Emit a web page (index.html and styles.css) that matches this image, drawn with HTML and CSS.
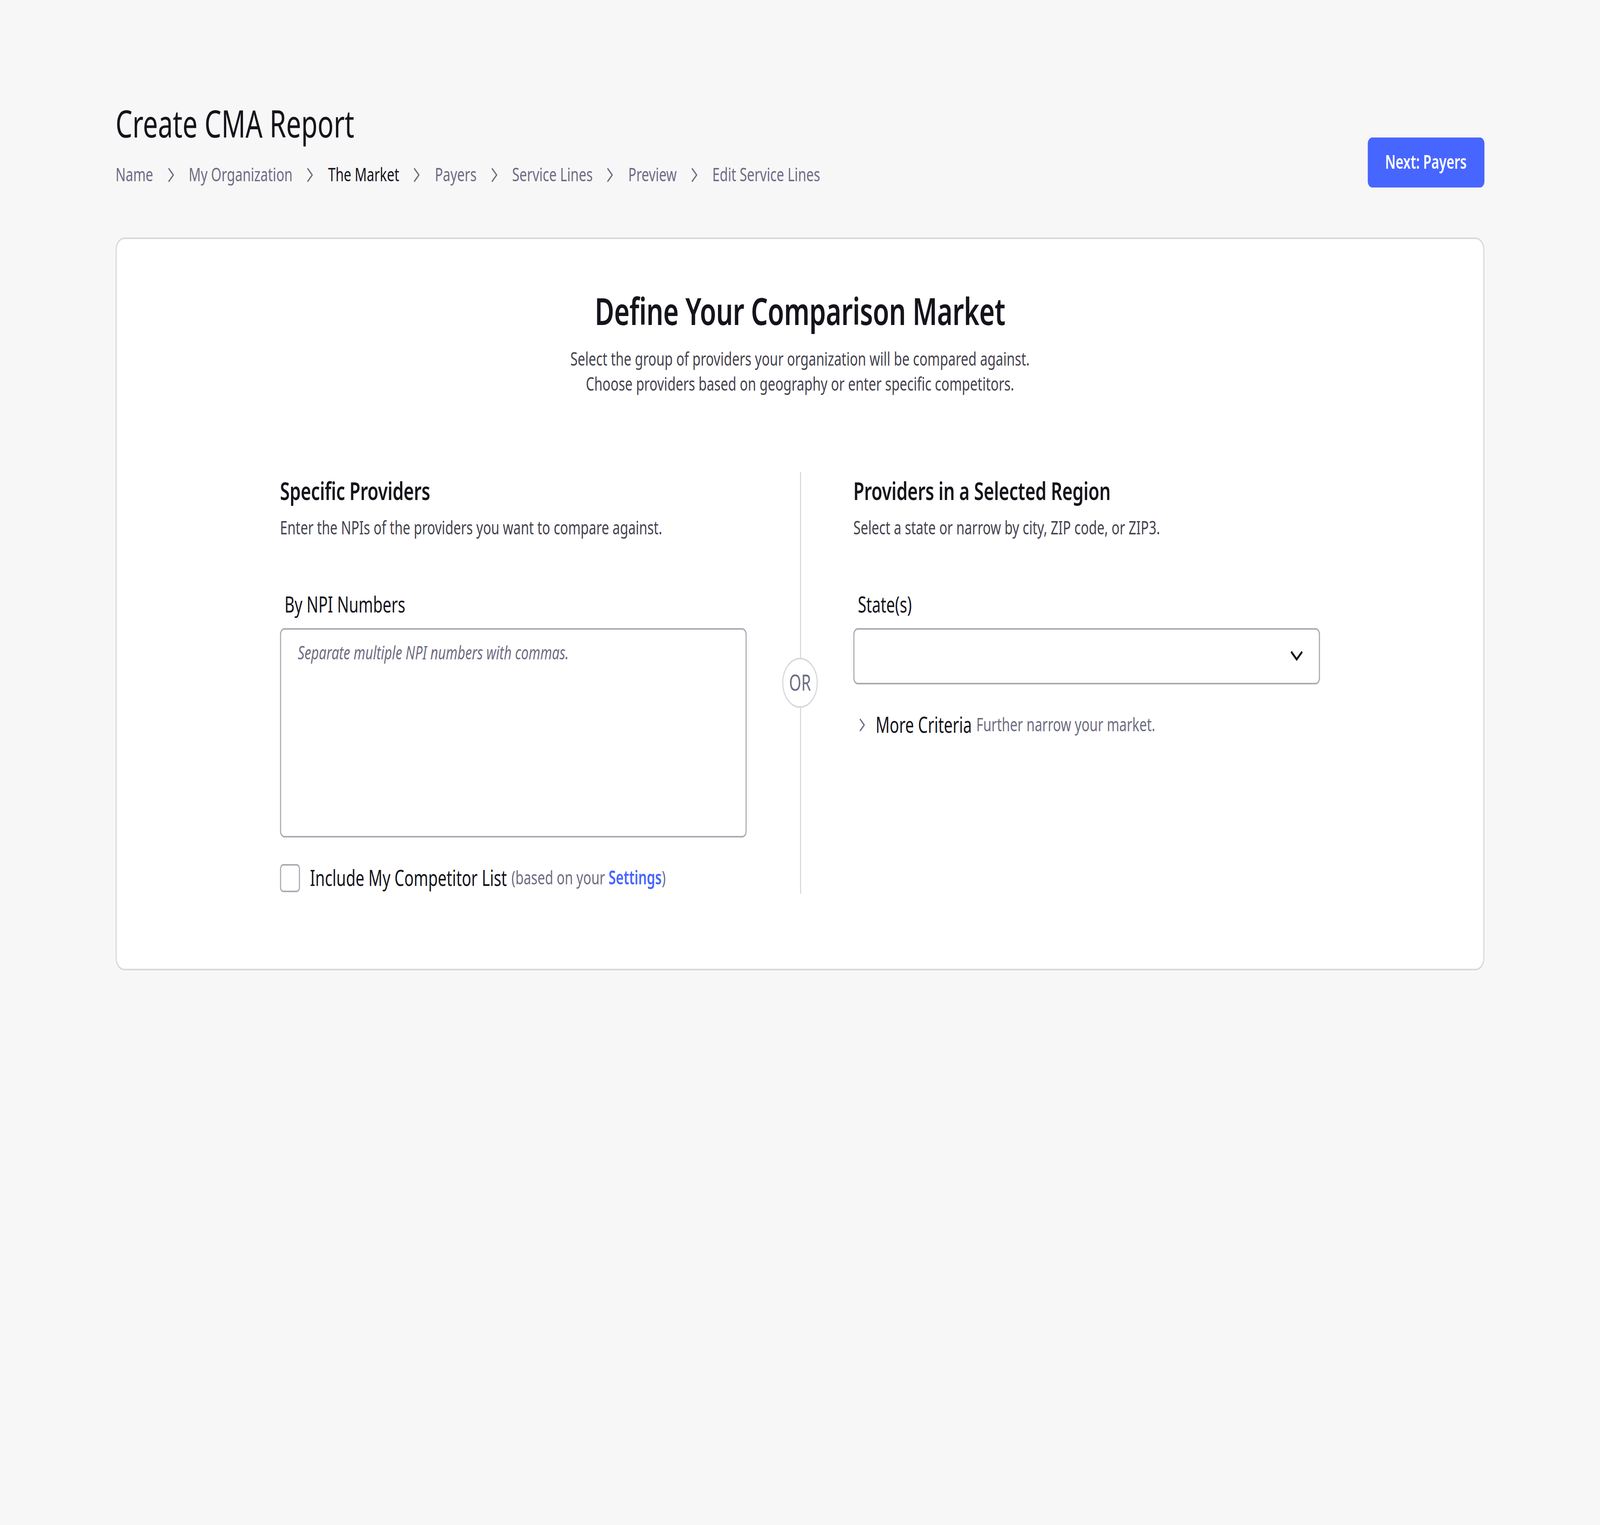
FILE: index.html
```html
<!DOCTYPE html>
<html lang="en">
<head>
<meta charset="utf-8">
<title>Create CMA Report</title>
<link rel="stylesheet" href="styles.css">
</head>
<body>
<div class="page">
  <header class="header">
    <div class="header-text">
      <h1 class="page-title">Create CMA Report</h1>
      <nav class="crumbs">
        <span class="crumb">Name</span>
        <svg class="crumb-sep" viewBox="0 0 16 16"><path d="M6 4 L10 8 L6 12"/></svg>
        <span class="crumb">My Organization</span>
        <svg class="crumb-sep" viewBox="0 0 16 16"><path d="M6 4 L10 8 L6 12"/></svg>
        <span class="crumb crumb-active">The Market</span>
        <svg class="crumb-sep" viewBox="0 0 16 16"><path d="M6 4 L10 8 L6 12"/></svg>
        <span class="crumb">Payers</span>
        <svg class="crumb-sep" viewBox="0 0 16 16"><path d="M6 4 L10 8 L6 12"/></svg>
        <span class="crumb">Service Lines</span>
        <svg class="crumb-sep" viewBox="0 0 16 16"><path d="M6 4 L10 8 L6 12"/></svg>
        <span class="crumb">Preview</span>
        <svg class="crumb-sep" viewBox="0 0 16 16"><path d="M6 4 L10 8 L6 12"/></svg>
        <span class="crumb">Edit Service Lines</span>
      </nav>
    </div>
    <button class="btn-primary" type="button">Next: Payers</button>
  </header>

  <section class="card">
    <h2 class="card-title">Define Your Comparison Market</h2>
    <p class="card-sub">Select the group of providers your organization will be compared against.<br>Choose providers based on geography or enter specific competitors.</p>

    <div class="columns">
      <div class="col">
        <h3 class="col-title">Specific Providers</h3>
        <p class="col-desc">Enter the NPIs of the providers you want to compare against.</p>
        <label class="field-label" for="npi">By NPI Numbers</label>
        <textarea id="npi" class="textarea" placeholder="Separate multiple NPI numbers with commas."></textarea>
        <div class="check-row">
          <span class="checkbox"></span>
          <span class="check-label">Include My Competitor List</span>
          <span class="check-note">(based on your <span class="link">Settings</span>)</span>
        </div>
      </div>

      <div class="divider">
        <span class="divider-line"></span>
        <span class="or">OR</span>
        <span class="divider-line"></span>
      </div>

      <div class="col">
        <h3 class="col-title">Providers in a Selected Region</h3>
        <p class="col-desc">Select a state or narrow by city, ZIP code, or ZIP3.</p>
        <div class="field-label">State(s)</div>
        <div class="select">
          <svg class="select-caret" viewBox="0 0 16 16"><path d="M3.6 5.6 L8 10 L12.4 5.6"/></svg>
        </div>
        <div class="more">
          <svg class="more-caret" viewBox="0 0 16 16"><path d="M6.2 4.4 L9.8 8 L6.2 11.6"/></svg>
          <span class="more-label">More Criteria</span>
          <span class="more-note">Further narrow your market.</span>
        </div>
      </div>
    </div>
  </section>
</div>
</body>
</html>
```

FILE: styles.css
```css
html {
  background: #f7f7f7;
}

body {
  margin: 0;
  min-height: 100vh;
  background: #f7f7f7;
  font-family: "Noto Sans", "Open Sans", "Liberation Sans", sans-serif;
  color: #16161d;
}

.page {
  box-sizing: border-box;
  width: 1440px;
  padding: 63px 104px 64px;
  transform-origin: 0 0;
  transform: scale(2.84444, 4);
}

.header {
  display: flex;
  justify-content: space-between;
  align-items: flex-end;
}

.page-title {
  margin: 0;
  font-size: 24px;
  line-height: 32px;
  font-weight: 400;
  color: #14141b;
}

.crumbs {
  display: flex;
  align-items: center;
  gap: 8px;
  margin-top: 9px;
  font-size: 12px;
  line-height: 16px;
}

.crumb {
  color: #6e6d84;
}

.crumb-active {
  color: #16161d;
}

.crumb-sep {
  width: 16px;
  height: 16px;
  fill: none;
  stroke: #6e6d84;
  stroke-width: 1;
  stroke-linecap: round;
  stroke-linejoin: round;
}

.btn-primary {
  height: 32px;
  padding: 0 16px;
  border: none;
  border-radius: 4px;
  background: #4766ff;
  color: #ffffff;
  font-family: inherit;
  font-size: 12px;
  font-weight: 600;
  line-height: 16px;
}

.card {
  margin-top: 32px;
  padding: 32px 32px 48px;
  background: #ffffff;
  border: 1px solid #d8d8dd;
  border-radius: 8px;
  text-align: center;
}

.card-title {
  margin: 0;
  font-size: 24px;
  line-height: 28px;
  font-weight: 600;
  letter-spacing: -0.2px;
  color: #14141b;
}

.card-sub {
  margin: 9px 0 0;
  font-size: 12px;
  line-height: 16px;
  color: #45444f;
}

.columns {
  display: grid;
  grid-template-columns: 1fr 32px 1fr;
  column-gap: 32px;
  max-width: 936px;
  margin: 48px auto 0;
  text-align: left;
}

.col {
  display: flex;
  flex-direction: column;
}

.col-title {
  margin: 0;
  font-size: 16px;
  line-height: 24px;
  font-weight: 600;
  letter-spacing: -0.1px;
  color: #14141b;
}

.col-desc {
  margin: 4px 0 0;
  font-size: 12px;
  line-height: 16px;
  color: #45444f;
}

.field-label {
  display: block;
  margin: 31px 0 5px;
  padding-left: 4px;
  font-size: 14px;
  line-height: 20px;
  color: #16161d;
}

.textarea {
  box-sizing: border-box;
  display: block;
  width: 100%;
  height: 134px;
  margin: 0;
  padding: 7px 15px;
  border: 1px solid #abaab4;
  border-radius: 4px;
  background: #ffffff;
  font-family: inherit;
  font-size: 12px;
  line-height: 16px;
  color: #16161d;
  resize: none;
  outline: none;
}

.textarea::placeholder {
  color: #6e6d82;
  font-style: italic;
}

.check-row {
  display: flex;
  align-items: center;
  margin-top: 16px;
  font-size: 14px;
  line-height: 20px;
}

.checkbox {
  box-sizing: border-box;
  flex: none;
  width: 18px;
  height: 18px;
  border: 1px solid #abaab4;
  border-radius: 3px;
  margin-right: 9px;
  background: #ffffff;
}

.check-label {
  color: #16161d;
}

.check-note {
  margin-left: 4px;
  font-size: 12px;
  color: #6e6d82;
}

.link {
  color: #4766ff;
  font-weight: 600;
}

.divider {
  display: flex;
  flex-direction: column;
  align-items: center;
}

.divider-line {
  flex: 1;
  width: 1px;
  background: #d8d8dd;
}

.or {
  box-sizing: border-box;
  display: flex;
  align-items: center;
  justify-content: center;
  width: 32px;
  height: 32px;
  border: 1px solid #d8d8dd;
  border-radius: 50%;
  font-size: 14px;
  line-height: 20px;
  color: #6e6d82;
}

.select {
  box-sizing: border-box;
  display: flex;
  align-items: center;
  justify-content: flex-end;
  height: 36px;
  padding: 0 12px;
  border: 1px solid #abaab4;
  border-radius: 4px;
  background: #ffffff;
}

.select-caret {
  width: 16px;
  height: 16px;
  fill: none;
  stroke: #16161d;
  stroke-width: 1.5;
  stroke-linecap: square;
}

.more {
  display: flex;
  align-items: center;
  margin-top: 16px;
  font-size: 14px;
  line-height: 20px;
}

.more-caret {
  width: 16px;
  height: 16px;
  margin-right: 4px;
  fill: none;
  stroke: #6e6d82;
  stroke-width: 1;
  stroke-linecap: round;
  stroke-linejoin: round;
}

.more-label {
  color: #16161d;
}

.more-note {
  margin-left: 4px;
  font-size: 12px;
  color: #6e6d82;
}
```
